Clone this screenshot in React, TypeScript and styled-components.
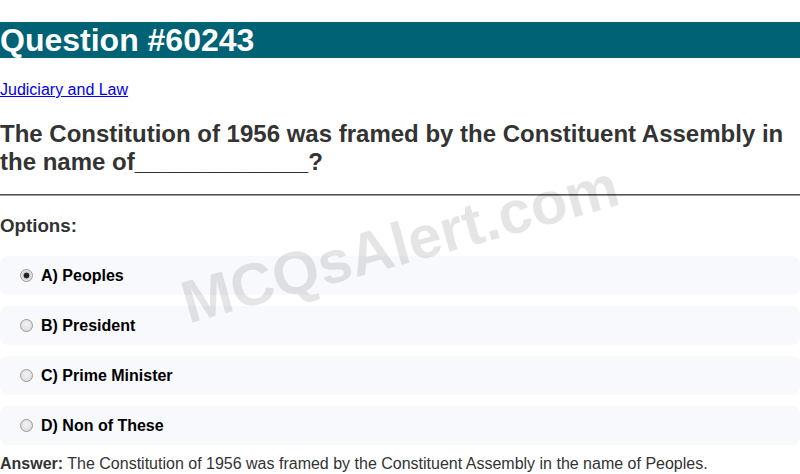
import React from 'react';
import styled, { createGlobalStyle } from 'styled-components';

const GlobalStyle = createGlobalStyle`
  body {
    margin: 0;
    font-family: "Liberation Sans", Arial, sans-serif;
    color: #333;
    background: #fff;
  }
`;

const Page = styled.main`
  position: relative;
  overflow: hidden;
  padding-top: 22px;
`;

const Header = styled.h1`
  margin: 0;
  font-size: 32px;
  font-weight: 700;
  color: #fff;
  background-color: #006275;
  line-height: 36px;
`;

const Category = styled.p`
  margin: 23px 0 0;
  font-size: 16px;
  line-height: 18.4px;
  & > a {
    color: #0000ee;
    text-decoration: underline;
  }
`;

const QuestionText = styled.h2`
  margin: 20.4px 0 0;
  font-size: 24px;
  line-height: 28px;
  color: #333;
`;

const Divider = styled.hr`
  margin: 18.2px 0 0;
  height: 0;
  border: none;
  border-top: 1px solid #555;
  border-bottom: 1px solid #999;
`;

const OptionsTitle = styled.h3`
  margin: 19px 0 19.5px;
  font-size: 18.72px;
  line-height: 21.5px;
  color: #333;
`;

const OptionList = styled.div`
  display: flex;
  flex-direction: column;
  gap: 11px;
`;

const Option = styled.label`
  display: flex;
  align-items: center;
  box-sizing: border-box;
  height: 39px;
  padding: 1px 15px 0;
  background-color: #f8f9fc;
  border-radius: 8px;
  font-size: 16px;
  font-weight: 700;
  color: #000;
`;

const Radio = styled.input`
  appearance: none;
  flex: none;
  box-sizing: border-box;
  width: 13px;
  height: 13px;
  margin: 0 8px 1px 5px;
  border-radius: 50%;
  border: 1px solid #9a9a9a;
  background: radial-gradient(circle at 50% 40%, #f4f4f4, #d6d6d6);
  &:checked {
    background: radial-gradient(circle, #222 0 2.6px, #cfcfcf 3.2px, #e8e8e8 5.5px);
  }
`;

const Answer = styled.p`
  margin: 10px 0 0;
  font-size: 16px;
  line-height: 18.4px;
  color: #333;
`;

const Watermark = styled.div`
  position: absolute;
  left: 400px;
  top: 244px;
  transform: translate(-50%, -50%) rotate(-15.4deg);
  font-size: 60px;
  font-weight: 700;
  color: rgba(0, 0, 0, 0.1);
  white-space: nowrap;
  pointer-events: none;
`;

const options = ['A) Peoples', 'B) President', 'C) Prime Minister', 'D) Non of These'];

export default function App() {
  return (
    <Page>
      <GlobalStyle />
      <Header>Question #60243</Header>
      <Category>
        <a href="#">Judiciary and Law</a>
      </Category>
      <QuestionText>
        The Constitution of 1956 was framed by the Constituent Assembly in the name of_____________?
      </QuestionText>
      <Divider />
      <OptionsTitle>Options:</OptionsTitle>
      <OptionList>
        {options.map((o, i) => (
          <Option key={o}>
            <Radio type="radio" name="opt" defaultChecked={i === 0} />
            {o}
          </Option>
        ))}
      </OptionList>
      <Answer>
        <strong>Answer:</strong> The Constitution of 1956 was framed by the Constituent Assembly in the name of Peoples.
      </Answer>
      <Watermark>MCQsAlert.com</Watermark>
    </Page>
  );
}
